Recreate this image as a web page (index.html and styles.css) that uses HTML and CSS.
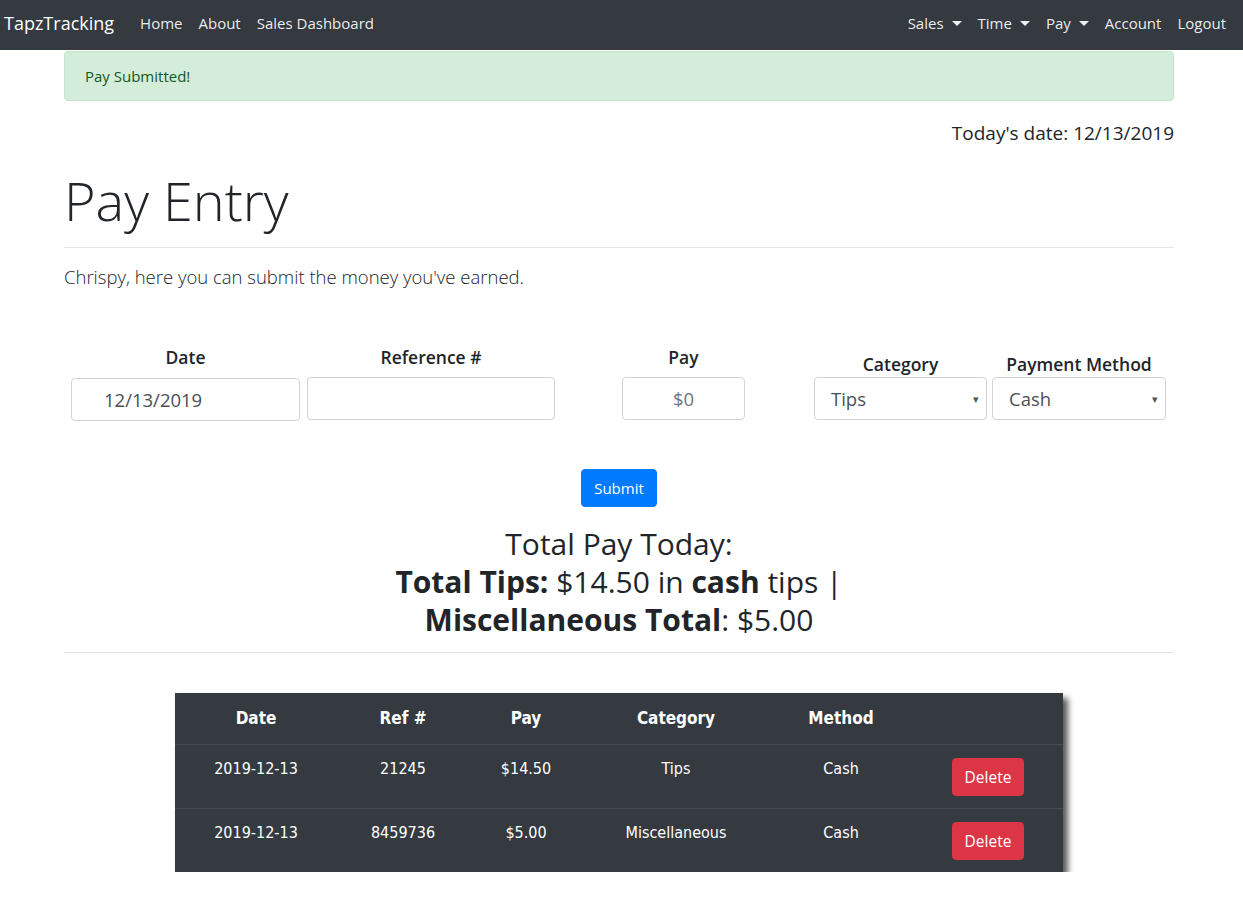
FILE: index.html
```html
<!DOCTYPE html>
<html>
<head>
<meta charset="utf-8">
<title>TapzTracking - Pay Entry</title>
<link rel="stylesheet" href="styles.css">
</head>
<body>
<nav class="navbar">
  <a class="brand" href="#">TapzTracking</a>
  <ul class="nav nav-left">
    <li><a href="#">Home</a></li>
    <li><a href="#">About</a></li>
    <li><a href="#">Sales Dashboard</a></li>
  </ul>
  <ul class="nav nav-right">
    <li><a href="#" class="dropdown">Sales</a></li>
    <li><a href="#" class="dropdown">Time</a></li>
    <li><a href="#" class="dropdown">Pay</a></li>
    <li><a href="#">Account</a></li>
    <li><a href="#">Logout</a></li>
  </ul>
</nav>

<main class="container">
  <div class="alert">Pay Submitted!</div>
  <p class="today">Today's date: 12/13/2019</p>
  <h1 class="title">Pay Entry</h1>
  <hr class="rule">
  <p class="lead">Chrispy, here you can submit the money you've earned.</p>

  <form class="pay-form">
    <div class="field field-date">
      <label class="lbl lbl-raised">Date</label>
      <div class="input input-date">12/13/2019</div>
    </div>
    <div class="field field-ref">
      <label class="lbl lbl-raised">Reference #</label>
      <div class="input"></div>
    </div>
    <div class="field field-pay">
      <label class="lbl lbl-raised">Pay</label>
      <div class="input input-pay">$0</div>
    </div>
    <div class="field field-cat">
      <label class="lbl">Category</label>
      <div class="input select">Tips<span class="caret">▾</span></div>
    </div>
    <div class="field field-method">
      <label class="lbl">Payment Method</label>
      <div class="input select">Cash<span class="caret">▾</span></div>
    </div>
  </form>

  <div class="submit-row">
    <button class="btn btn-primary" type="button">Submit</button>
  </div>

  <h2 class="totals">Total Pay Today:<br><b>Total Tips:</b> $14.50 in <b>cash</b> tips |<br><b>Miscellaneous Total</b>: $5.00</h2>
  <hr class="rule rule-bottom">

  <div class="table-wrap">
    <table class="pay-table">
      <colgroup>
        <col style="width:162px"><col style="width:132px"><col style="width:114px"><col style="width:186px"><col style="width:144px"><col style="width:150px">
      </colgroup>
      <thead>
        <tr><th>Date</th><th>Ref #</th><th>Pay</th><th>Category</th><th>Method</th><th></th></tr>
      </thead>
      <tbody>
        <tr><td>2019-12-13</td><td>21245</td><td>$14.50</td><td>Tips</td><td>Cash</td><td><button class="btn btn-danger" type="button">Delete</button></td></tr>
        <tr><td>2019-12-13</td><td>8459736</td><td>$5.00</td><td>Miscellaneous</td><td>Cash</td><td><button class="btn btn-danger" type="button">Delete</button></td></tr>
      </tbody>
    </table>
  </div>
</main>
</body>
</html>
```

FILE: styles.css
```css
* { box-sizing: border-box; }
html, body { margin: 0; padding: 0; }
body {
  font-family: "Open Sans", "Noto Sans", "Liberation Sans", sans-serif;
  color: #212529;
  background: #fff;
  font-size: 16px;
  line-height: 1.5;
}

.navbar {
  display: flex;
  align-items: center;
  height: 50px;
  background: #343a40;
  padding: 0 9px 0 4px;
}
.brand {
  color: #fff;
  font-size: 18px;
  text-decoration: none;
  margin-right: 18px;
  position: relative;
  top: -2px;
}
.nav {
  display: flex;
  list-style: none;
  margin: 0;
  padding: 0;
  position: relative;
  top: -2px;
}
.nav-right { margin-left: auto; }
.nav a {
  display: block;
  color: rgba(255,255,255,.92);
  text-decoration: none;
  font-size: 15px;
  padding: 8px 8px;
}
.dropdown::after {
  content: "";
  display: inline-block;
  margin-left: 8px;
  vertical-align: 3px;
  border-top: 5px solid;
  border-left: 5px solid transparent;
  border-right: 5px solid transparent;
}

.container {
  width: 1110px;
  margin-left: 64px;
}

.alert {
  margin-top: 1px;
  background: #d4edda;
  border: 1px solid #c3e6cb;
  color: #155724;
  border-radius: 4px;
  padding: 12px 20px;
  font-size: 15px;
  line-height: 24px;
}

.today {
  text-align: right;
  font-size: 19px;
  line-height: 30px;
  margin: 17px 0 0;
}

.title {
  font-size: 54px;
  font-weight: 300;
  line-height: 1.2;
  margin: 20px 0 0;
}

.rule {
  border: 0;
  border-top: 1px solid rgba(0,0,0,.1);
  margin: 14px 0 0;
}

.lead {
  font-size: 18.5px;
  font-weight: 300;
  line-height: 30px;
  margin: 14px 0 0;
}

.pay-form {
  display: flex;
  align-items: flex-end;
  padding-left: 7px;
  margin-top: 52px;
}
.field {
  display: flex;
  flex-direction: column;
  align-items: center;
}
.lbl {
  font-size: 17.5px;
  font-weight: 600;
  line-height: 26px;
  margin-bottom: 0;
}
.lbl-raised { margin-bottom: 7px; }
.field-date { width: 229px; }
.field-ref { width: 248px; margin-left: 7px; }
.field-pay { width: 123px; margin-left: 67px; }
.field-cat { width: 173px; margin-left: 69px; }
.field-method { width: 174px; margin-left: 5px; }
.field-date .input { transform: translateY(1px); }

.input {
  width: 100%;
  height: 43px;
  border: 1px solid #ced4da;
  border-radius: 4px;
  background: #fff;
  color: #495057;
  font-size: 18.5px;
  line-height: 41px;
  padding: 0 16px;
  position: relative;
}
.input-date { padding-left: 32px; }
.input-pay { text-align: center; color: #6c757d; }
.caret {
  position: absolute;
  right: 7px;
  top: 0;
  font-size: 11px;
  color: #555;
}

.submit-row {
  display: flex;
  justify-content: center;
  margin-top: 49px;
}
.btn {
  border: 1px solid transparent;
  border-radius: 4px;
  font-family: inherit;
  font-size: 15px;
  line-height: 24px;
  padding: 6px 12px;
  color: #fff;
}
.btn-primary { background: #007bff; border-color: #007bff; }
.btn-danger { background: #dc3545; border-color: #dc3545; }

.totals {
  text-align: center;
  font-size: 30px;
  font-weight: 400;
  line-height: 38px;
  margin: 18px 0 0;
}
.totals b { font-weight: 700; }

.rule-bottom { margin-top: 13px; }

.table-wrap {
  padding: 40px 0 0 111px;
}
.pay-table {
  width: 888px;
  table-layout: fixed;
  border-collapse: collapse;
  background: #343a40;
  color: #fff;
  box-shadow: 5px 5px 6px rgba(0,0,0,.65);
  font-family: "DejaVu Sans Condensed", "DejaVu Sans", sans-serif;
}
.pay-table th {
  font-size: 17px;
  font-weight: 700;
  line-height: 27px;
  padding: 12px;
  text-align: center;
}
.pay-table td {
  font-size: 16px;
  line-height: 24px;
  padding: 12px;
  text-align: center;
  vertical-align: top;
  border-top: 1px solid #454d55;
}
.pay-table td .btn {
  font-family: "Open Sans", sans-serif;
  font-size: 15.5px;
  margin-top: 1px;
}
```
